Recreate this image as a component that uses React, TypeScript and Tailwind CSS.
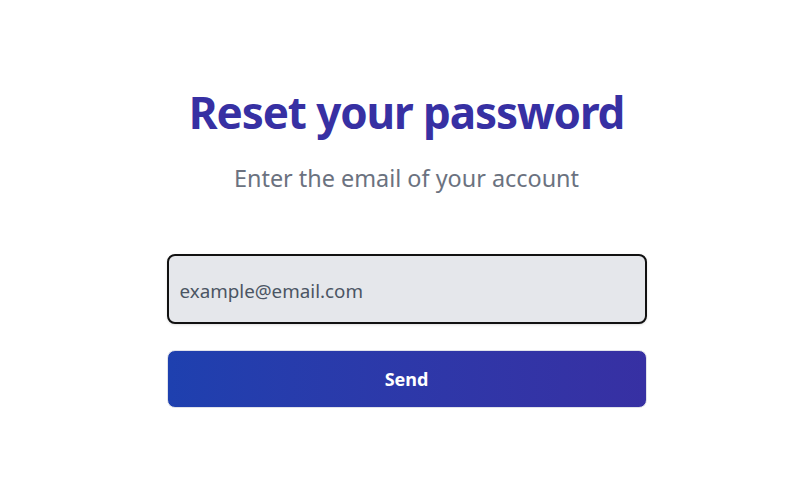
export default function App() {
  return (
    <div
      className="min-h-[490px] w-full bg-white flex justify-center pl-5"
      style={{ fontFamily: '"Noto Sans", "Open Sans", sans-serif' }}
    >
      <div className="w-[480px] flex flex-col items-center pt-[82px]">
        <h1 className="text-[44px] leading-[60px] font-bold text-[#3730a3] tracking-[-1.1px]">
          Reset your password
        </h1>
        <p className="mt-[20px] text-[23.4px] leading-[32px] text-[#6b7280]">
          Enter the email of your account
        </p>
        <input
          type="email"
          placeholder="example@email.com"
          className="mt-[60px] w-full h-[70px] rounded-lg border-2 border-[#111111] bg-[#e5e7eb] pl-[11px] pr-3 pt-[3px] text-[18.8px] text-gray-900 placeholder:text-[#4b5563] shadow-sm outline-none"
        />
        <button className="mt-[26px] w-[480px] h-[58px] rounded-lg border border-[#e0e2ea] bg-gradient-to-r from-[#1e40af] to-[#3730a3] text-white text-[18px] font-bold">
          Send
        </button>
      </div>
    </div>
  );
}
